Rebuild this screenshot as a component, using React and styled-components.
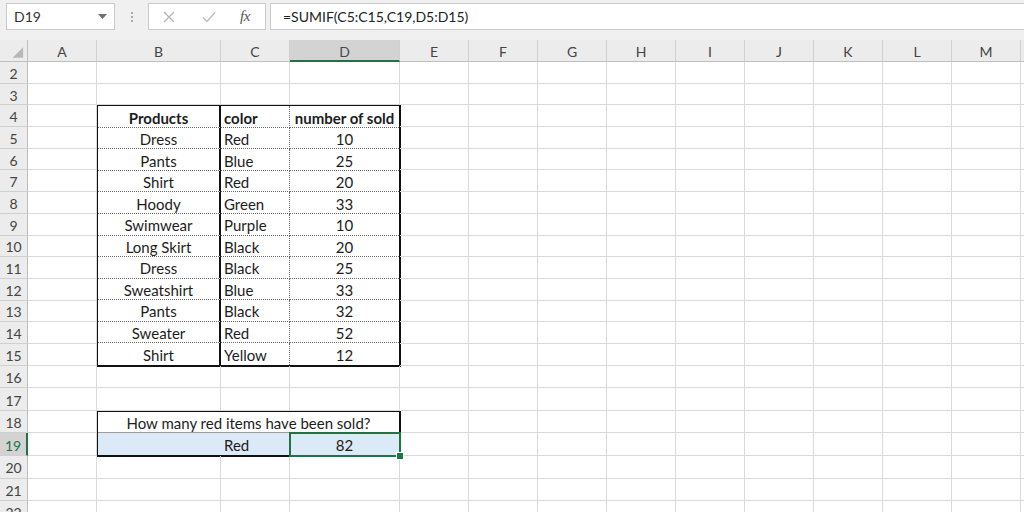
import React from 'react'
import styled, { createGlobalStyle } from 'styled-components'

const GlobalStyle = createGlobalStyle`
  html, body {
    margin: 0;
    padding: 0;
    background: #fff;
    overflow: hidden;
  }
  body {
    font-family: Lato, "Open Sans", "Liberation Sans", sans-serif;
    color: #1d1d1d;
  }
`

const Window = styled.div`
  width: 1024px;
  height: 512px;
  overflow: hidden;
  display: flex;
  flex-direction: column;
  background: #fff;
`

const FormulaBar = styled.div`
  height: 40px;
  flex: none;
  display: flex;
  align-items: flex-start;
  box-sizing: border-box;
  padding: 3px 0 0 6px;
  background: #f0f0f0;
`

const NameBox = styled.div`
  width: 109px;
  height: 27px;
  box-sizing: border-box;
  background: #fff;
  border: 1px solid #cacaca;
  display: flex;
  align-items: center;
  justify-content: space-between;
  padding: 0 7px 0 7px;
  font-size: 14px;
  color: #333;
`

const Grip = styled.div`
  width: 33px;
  height: 27px;
  display: flex;
  flex-direction: column;
  align-items: center;
  justify-content: center;
  gap: 2px;
`

const GripDot = styled.span`
  width: 2px;
  height: 2px;
  background: #a9a9a9;
`

const FxButtons = styled.div`
  width: 118px;
  height: 27px;
  box-sizing: border-box;
  background: #fff;
  border: 1px solid #cacaca;
  display: flex;
  align-items: center;
`

const FxSlot = styled.div`
  width: ${p => p.$w}px;
  height: 100%;
  display: flex;
  align-items: center;
  justify-content: center;
`

const FxLabel = styled.span`
  font-family: "Liberation Serif", "DejaVu Serif", serif;
  font-style: italic;
  font-size: 15px;
  color: #555;
  letter-spacing: -0.5px;
`

const FormulaInput = styled.div`
  flex: 1;
  height: 27px;
  margin-left: 4px;
  box-sizing: border-box;
  background: #fff;
  border: 1px solid #cacaca;
  border-right: none;
  display: flex;
  align-items: center;
  padding-left: 12px;
  font-size: 14px;
  color: #222;
`

const Sheet = styled.div`
  flex: none;
  display: grid;
  grid-template-columns: 28px 69px 124px 69px 110px repeat(10, 69px);
  grid-template-rows: 22px repeat(14, 21.7px) repeat(7, 22.6px);
  font-size: 15px;
`

const Corner = styled.div`
  background: #ececec;
  border-right: 1px solid #bfbfbf;
  border-bottom: 1px solid #bfbfbf;
  box-sizing: border-box;
  display: flex;
`

const ColHead = styled.div`
  box-sizing: border-box;
  display: flex;
  align-items: center;
  justify-content: center;
  padding-top: 2px;
  font-size: 14px;
  color: ${p => (p.$active ? '#4a4a4a' : '#444')};
  background: ${p => (p.$active ? '#d3d3d3' : '#ececec')};
  border-right: 1px solid #d0d0d0;
  border-bottom: ${p => (p.$active ? '2px solid #217346' : '1px solid #bfbfbf')};
`

const RowHead = styled.div`
  box-sizing: border-box;
  display: flex;
  align-items: center;
  justify-content: center;
  padding-top: 2px;
  font-size: 14px;
  color: ${p => (p.$active ? '#217346' : '#444')};
  background: ${p => (p.$active ? '#d3d3d3' : '#ececec')};
  border-right: ${p => (p.$active ? '2px solid #217346' : '1px solid #bfbfbf')};
  border-bottom: 1px solid #d0d0d0;
`

const Cell = styled.div`
  box-sizing: border-box;
  border-right: 1px solid #dadada;
  border-bottom: 1px solid #dadada;
`

const DataTable = styled.div`
  grid-column: 3 / 6;
  grid-row: 4 / 16;
  margin: -1px;
  box-sizing: border-box;
  border: 2px solid #111;
  display: grid;
  grid-template-columns: 123px 69px 1fr;
  grid-template-rows: repeat(12, 1fr);
  background: #fff;
`

const TableCell = styled.div`
  box-sizing: border-box;
  display: flex;
  align-items: center;
  justify-content: ${p => (p.$left ? 'flex-start' : 'center')};
  padding: 2px 3px 0;
  white-space: nowrap;
  font-weight: ${p => (p.$bold ? 700 : 400)};
  border-bottom: ${p => (p.$last ? 'none' : '1px dotted #6a6a6a')};
  border-right: ${p =>
    p.$divider === 'solid' ? '2px solid #111' : p.$divider === 'dotted' ? '1px dotted #6a6a6a' : 'none'};
`

const Summary = styled.div`
  grid-column: 3 / 6;
  grid-row: 18 / 20;
  margin: -1px;
  box-sizing: border-box;
  border: 2px solid #111;
  display: grid;
  grid-template-columns: 123px 69px 1fr;
  grid-template-rows: 1fr 1fr;
  background: #fff;
`

const Question = styled.div`
  grid-column: 1 / -1;
  display: flex;
  align-items: center;
  justify-content: center;
  padding-top: 2px;
  border-bottom: 1px solid #9c9c9c;
`

const FillCell = styled.div`
  background: #dce9f6;
  display: flex;
  align-items: center;
  justify-content: ${p => (p.$center ? 'center' : 'flex-start')};
  padding: 2px 3px 0;
`

const SelectedCell = styled(FillCell)`
  position: relative;
  &::after {
    content: '';
    position: absolute;
    top: -1px;
    left: -1px;
    right: -2px;
    bottom: -2px;
    border: 2px solid #217346;
    z-index: 1;
  }
`

const FillHandle = styled.span`
  position: absolute;
  right: -5px;
  bottom: -5px;
  width: 6px;
  height: 6px;
  background: #217346;
  border: 1px solid #fff;
  z-index: 2;
`

const columns = ['A', 'B', 'C', 'D', 'E', 'F', 'G', 'H', 'I', 'J', 'K', 'L', 'M', '']

const products = [
  ['Dress', 'Red', 10],
  ['Pants', 'Blue', 25],
  ['Shirt', 'Red', 20],
  ['Hoody', 'Green', 33],
  ['Swimwear', 'Purple', 10],
  ['Long Skirt', 'Black', 20],
  ['Dress', 'Black', 25],
  ['Sweatshirt', 'Blue', 33],
  ['Pants', 'Black', 32],
  ['Sweater', 'Red', 52],
  ['Shirt', 'Yellow', 12]
]

// sheet rows 4-15 and 18-19 in columns B..D are drawn by the table blocks
const isCovered = (row, col) => {
  if (col < 1 || col > 3) return false
  return (row >= 4 && row <= 15) || (row >= 18 && row <= 19)
}

function CloseIcon () {
  return (
    <svg width="12" height="12" viewBox="0 0 12 12">
      <path d="M1 1 L11 11 M11 1 L1 11" stroke="#b5b5b5" strokeWidth="1.3" fill="none" />
    </svg>
  )
}

function CheckIcon () {
  return (
    <svg width="14" height="12" viewBox="0 0 14 12">
      <path d="M1 6.5 L5 10.5 L13 1.5" stroke="#bdbdbd" strokeWidth="1.5" fill="none" />
    </svg>
  )
}

function DropArrow () {
  return (
    <svg width="9" height="5" viewBox="0 0 9 5">
      <path d="M0 0 H9 L4.5 5 Z" fill="#707070" />
    </svg>
  )
}

function SelectAll () {
  return (
    <svg width="28" height="22" viewBox="0 0 28 22">
      <path d="M24 7 L24 18 L13 18 Z" fill="#b8b8b8" />
    </svg>
  )
}

export default function App () {
  const rows = []
  for (let r = 2; r <= 22; r++) rows.push(r)

  return (
    <Window>
      <GlobalStyle />
      <FormulaBar>
        <NameBox>
          <span>D19</span>
          <DropArrow />
        </NameBox>
        <Grip>
          <GripDot />
          <GripDot />
          <GripDot />
        </Grip>
        <FxButtons>
          <FxSlot $w={40}><CloseIcon /></FxSlot>
          <FxSlot $w={40}><CheckIcon /></FxSlot>
          <FxSlot $w={32}><FxLabel>fx</FxLabel></FxSlot>
        </FxButtons>
        <FormulaInput>=SUMIF(C5:C15,C19,D5:D15)</FormulaInput>
      </FormulaBar>

      <Sheet>
        <Corner><SelectAll /></Corner>
        {columns.map((c, i) => (
          <ColHead key={i} $active={c === 'D'}>{c}</ColHead>
        ))}

        <DataTable>
          <TableCell $bold $divider="solid">Products</TableCell>
          <TableCell $bold $left $divider="dotted">color</TableCell>
          <TableCell $bold>number of sold</TableCell>
          {products.map(([name, color, sold], i) => {
            const last = i === products.length - 1
            return (
              <React.Fragment key={i}>
                <TableCell $divider="solid" $last={last}>{name}</TableCell>
                <TableCell $left $divider="dotted" $last={last}>{color}</TableCell>
                <TableCell $last={last}>{sold}</TableCell>
              </React.Fragment>
            )
          })}
        </DataTable>

        <Summary>
          <Question>How many red items have been sold?</Question>
          <FillCell />
          <FillCell>Red</FillCell>
          <SelectedCell $center>
            82
            <FillHandle />
          </SelectedCell>
        </Summary>

        {rows.map(r => (
          <React.Fragment key={r}>
            <RowHead $active={r === 19}>{r}</RowHead>
            {columns.map((c, ci) =>
              isCovered(r, ci) ? null : <Cell key={ci} />
            )}
          </React.Fragment>
        ))}
      </Sheet>
    </Window>
  )
}
